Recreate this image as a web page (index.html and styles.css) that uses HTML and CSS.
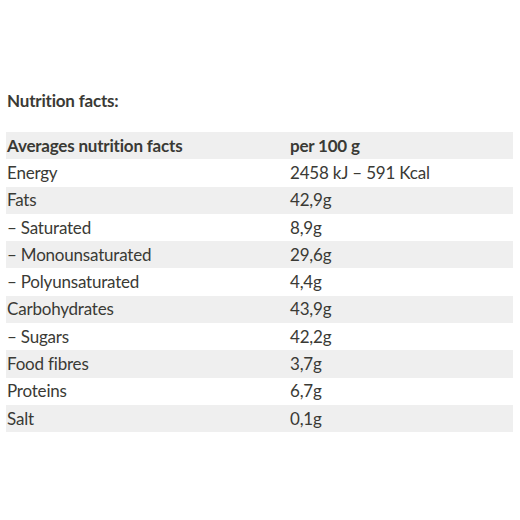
FILE: index.html
```html
<!DOCTYPE html>
<html>
<head>
  <title>Nutrition facts</title>
  <link rel="stylesheet" href="styles.css">
</head>
<body>
  <h3 class="title">Nutrition facts:</h3>
  <table class="facts">
    <tr class="head"><th>Averages nutrition facts</th><th>per 100 g</th></tr>
    <tr><td>Energy</td><td>2458 kJ – 591 Kcal</td></tr>
    <tr><td>Fats</td><td>42,9g</td></tr>
    <tr><td>– Saturated</td><td>8,9g</td></tr>
    <tr><td>– Monounsaturated</td><td>29,6g</td></tr>
    <tr><td>– Polyunsaturated</td><td>4,4g</td></tr>
    <tr><td>Carbohydrates</td><td>43,9g</td></tr>
    <tr><td>– Sugars</td><td>42,2g</td></tr>
    <tr><td>Food fibres</td><td>3,7g</td></tr>
    <tr><td>Proteins</td><td>6,7g</td></tr>
    <tr><td>Salt</td><td>0,1g</td></tr>
  </table>
</body>
</html>
```

FILE: styles.css
```css
body {
  margin: 0;
  padding: 0 7px 0 6px;
  background-color: #fff;
  font-family: Lato, "Open Sans", sans-serif;
  color: #3a3a35;
  letter-spacing: -0.2px;
}

.title {
  font-size: 17px;
  font-weight: bold;
  margin: 0;
  padding: 90px 0 0 1px;
  height: 42px;
  box-sizing: content-box;
}

.facts {
  width: 100%;
  border-collapse: collapse;
  font-size: 17px;
}

.facts tr {
  height: 27.3px;
}

.facts tr:nth-child(odd) {
  background-color: #efefef;
}

.facts th,
.facts td {
  text-align: left;
  padding: 0 0 0 1px;
  line-height: 20px;
}

.facts th {
  font-weight: bold;
}

.facts td:first-child,
.facts th:first-child {
  width: 282px;
}
```
